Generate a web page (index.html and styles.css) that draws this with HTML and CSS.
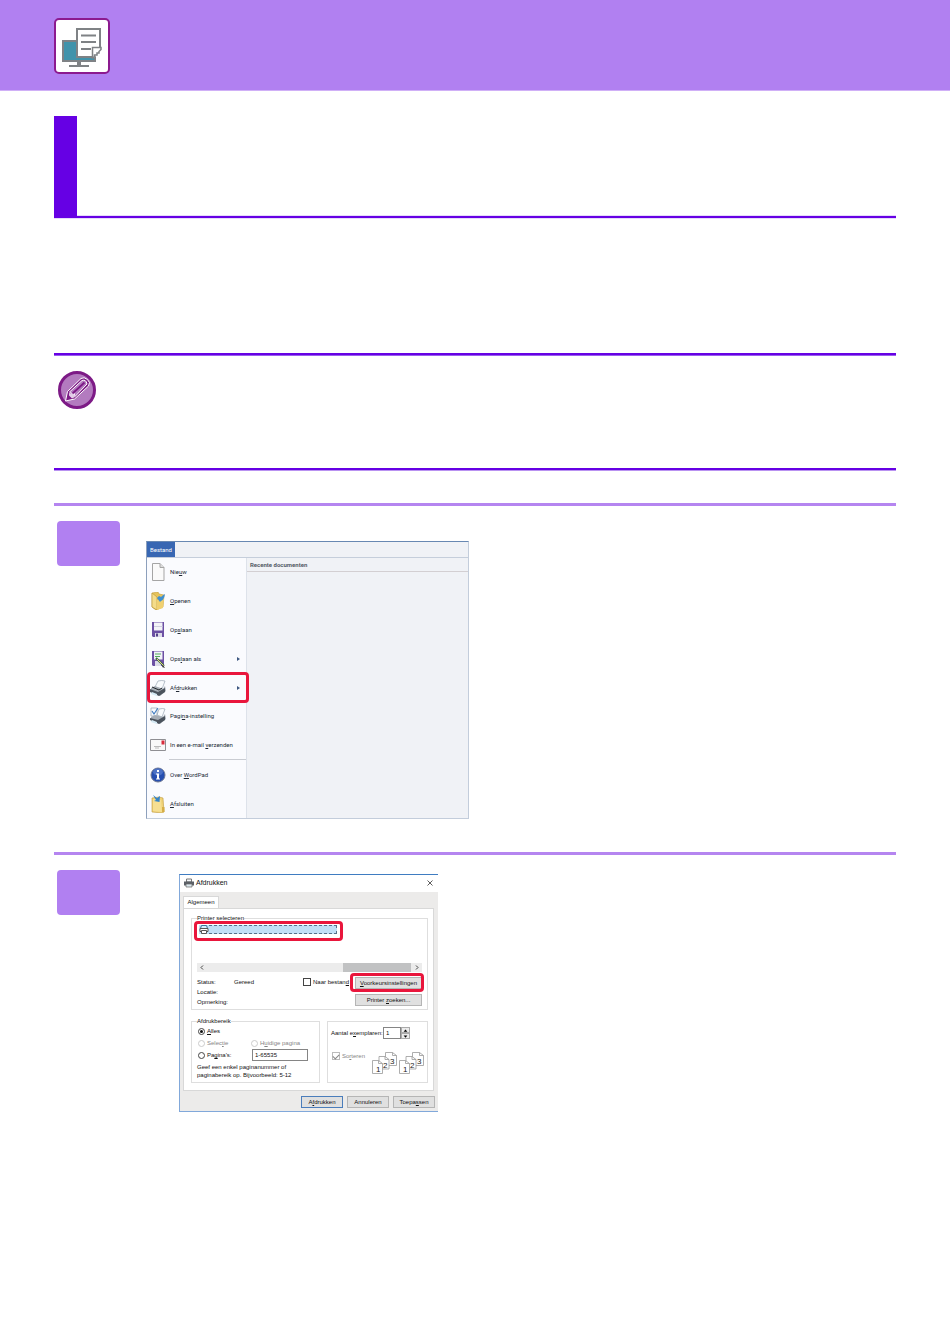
FILE: index.html
```html
<!DOCTYPE html>
<html lang="nl">
<head>
<meta charset="utf-8">
<title>Afdrukken</title>
<link rel="stylesheet" href="styles.css">
</head>
<body>
<header class="banner">
  <svg class="banner-icon" viewBox="0 0 56 56" aria-hidden="true">
    <rect x="1" y="1" width="54" height="54" rx="4" fill="#fff" stroke="#8c1a8f" stroke-width="2"/>
    <rect x="9" y="23" width="32" height="20" fill="#4193ab" stroke="#7f8285" stroke-width="2"/>
    <path d="M23 44h4v3h8v2H15v-2h8z" fill="#7f8285"/>
    <path d="M23 11h23v19l-8 9H23z" fill="#fff"/>
    <path d="M38 39H23V11h23v18" fill="none" stroke="#7f8285" stroke-width="2"/>
    <path d="M38 40V29h9v3l-7 8z" fill="#fff"/>
    <path d="M38.500 40V29.500H47v2l-2 2v1.500h-2v2h-2.500v2z" fill="#fff" stroke="#7f8285" stroke-width="1.500"/>
    <path d="M27 17.500h15M27 24h15M27 31h10" stroke="#7f8285" stroke-width="2"/>
  </svg>
</header>
<main class="content">
  <div class="title-block"></div>
  <section class="note">
    <svg class="note-icon" viewBox="0 0 38 38" aria-hidden="true">
      <circle cx="19" cy="19" r="17.500" fill="#b37bbf" stroke="#7d1a86" stroke-width="3"/>
      <path d="M7.500 30L9.500 20.500 23 7.500q3-2 6.500 1t1 6.500L16.500 28z" fill="#7d1a86" stroke="#fff" stroke-width="1" stroke-linejoin="round"/>
      <path d="M11.500 21L24 9.500q4-1.500 5 3.500L17 25.500l-1-3.500-3 .3z" fill="#b37bbf" stroke="#fff" stroke-width="1"/>
      <path d="M14.500 22.500L26.500 11.500" stroke="#7d1a86" stroke-width="1.800"/>
      <path d="M11 22l2 .5 3 .5 1 3-3 1.500-3-3z" fill="#e3cce8"/>
    </svg>
  </section>

  <section class="step step-menu">
    <div class="badge"></div>
    <div class="wordpad">
      <div class="tabs"><button class="file-tab">Bestand</button></div>
      <nav class="menu">
        <button class="item"><svg viewBox="0 0 16 18"><path d="M2.500 .500h7.500l4 4v13H2.500z" fill="#fafafa" stroke="#a5a5a5"/><path d="M10 .500v4h4" fill="#ddd" stroke="#a5a5a5"/></svg><span>Nie<u>u</u>w</span></button>
        <button class="item"><svg viewBox="0 0 16 18"><path d="M2 1l6-1 1 2 5 1-1 12-7 3-4-3z" fill="#e6c35a" stroke="#c39b36" stroke-width=".6"/><path d="M2 1l5 4v13l-5-3z" fill="#f4dc8a" stroke="#b89332" stroke-width=".6"/><path d="M7 8l7-3-1 11-6 2z" fill="#f0d070"/><path d="M7 6l2-2 2 1q2-2 4-3-1 6-4 7l-1 1z" fill="#3f8fd0"/></svg><span><u>O</u>penen</span></button>
        <button class="item"><svg viewBox="0 0 16 18"><path d="M2 1h12v15H3l-1-1z" fill="#6c50a4"/><path d="M4 1.500h8.500v8H4z" fill="#f3f3f8"/><path d="M4 5.500h8.500" stroke="#cfcfdf"/><path d="M5 12h7v4H5z" fill="#dcdbe8"/><path d="M6 12.500h2v3H6z" fill="#54408a"/></svg><span>Op<u>s</u>laan</span></button>
        <button class="item"><svg viewBox="0 0 16 18"><path d="M2 1h12v15H3l-1-1z" fill="#6c50a4"/><path d="M4 1.500h8.500v8H4z" fill="#f3f3f8"/><path d="M5 4h6M5 6.500h5" stroke="#53ad5d"/><path d="M5 11h6v5H5z" fill="#dcdbe8"/><path d="M6 8l8 8" stroke="#3c6e3f" stroke-width="2"/><path d="M7 9l7 7" stroke="#e3cf83"/><path d="M13 15l2 3-3-1z" fill="#333"/></svg><span>Ops<u>l</u>aan als</span><i class="arrow"></i></button>
        <button class="item marked"><svg viewBox="0 0 16 18"><path d="M5 8l3-6q4-1 7 0l-3 8z" fill="#f9fbfd" stroke="#9aa6b3" stroke-width=".7"/><path d="M1 9l4-2 8 3 2-3 1 5-6 5-9-4z" fill="#a6adb5"/><path d="M0 10l8 3 7-4v4l-6 4-9-4z" fill="#4b535d"/><path d="M2 13l5 2v2l-6-2z" fill="#d4e9f4"/><path d="M2 8l7 3 3-2" fill="none" stroke="#22272d"/></svg><span>Af<u>d</u>rukken</span><i class="arrow"></i></button>
        <button class="item"><svg viewBox="0 0 16 18"><path d="M1 1l6 0v8H1zM7 8l2-6q4-1 6 0l-3 8z" fill="#f9fbfd" stroke="#9aa6b3" stroke-width=".7"/><path d="M2 4l2 3 4-6" fill="none" stroke="#417cc0" stroke-width="1.200"/><path d="M1 10l4-2 8 2 2-3 1 5-6 5-9-4z" fill="#a6adb5"/><path d="M0 11l8 2 7-4v4l-6 4-9-4z" fill="#4b535d"/><path d="M2 13l5 2v2l-6-2z" fill="#d4e9f4"/></svg><span>Pagi<u>n</u>a-instelling</span></button>
        <button class="item"><svg viewBox="0 0 16 18"><path d="M.500 3.500h15v11H.500z" fill="#f8f8f8" stroke="#8f8f93"/><path d="M11.500 4.500h3v4h-3z" fill="#d82c3c"/><path d="M4 10.500h7M5 12h4" stroke="#aaa" stroke-width=".8"/></svg><span>In een e-mail <u>v</u>erzenden</span></button>
        <hr class="divider">
        <button class="item"><svg viewBox="0 0 16 18"><circle cx="8" cy="9" r="7" fill="#264fb0" stroke="#707a94"/><ellipse cx="8" cy="6" rx="5" ry="3.500" fill="#4b71c5"/><path d="M7 4h2v2H7zM6 7.500h3v5h1v1H6v-1h1v-4H6z" fill="#fff"/></svg><span>Over <u>W</u>ordPad</span></button>
        <button class="item"><svg viewBox="0 0 16 18"><path d="M2 3l7-1 4 1 1 14-2 1-10-1z" fill="#efd276" stroke="#bf993c" stroke-width=".6"/><path d="M3 4l8 1 1 12-9-1z" fill="#f6df92"/><path d="M3 0l4 3 3-2-.500 6L4 6l2-1z" fill="#3684c8"/><path d="M12 12h2.500v5H12z" fill="#d6ae45"/></svg><span><u>A</u>fsluiten</span></button>
      </nav>
      <section class="recent"><h2>Recente documenten</h2></section>
    </div>
  </section>

  <section class="step step-dialog">
    <div class="badge"></div>
    <form class="dialog" onsubmit="return false">
      <div class="dialog-title">
        <svg class="printer" viewBox="0 0 10 10"><path d="M2.500 1h5v3h-5z" fill="#f5f7f9" stroke="#777"/><path d="M0 3.500h10v4H0z" fill="#5b6067"/><path d="M2 6h6v3H2z" fill="#dce9ee" stroke="#666" stroke-width=".7"/></svg>
        <span>Afdrukken</span>
        <button class="close" type="button" aria-label="Sluiten"><svg viewBox="0 0 6 6"><path d="M.500.500l5 5m0-5l-5 5" stroke="#333" stroke-width=".8"/></svg></button>
      </div>
      <div class="dialog-body">
        <button class="tab" type="button">Algemeen</button>
        <div class="sheet">
          <fieldset class="printers">
            <legend>Printer selecteren</legend>
            <div class="printer-list">
              <button class="printer-row" type="button" aria-label="Printer"><svg viewBox="0 0 10 9"><path d="M2.500.500h5l1 3h-7z" fill="#d9f0ff" stroke="#39749c"/><path d="M1 3.500h8v3H1z" fill="#fff" stroke="#555"/><path d="M2.500 5.500h5v3h-5z" fill="#fff" stroke="#555"/></svg><span class="focus"></span></button>
            </div>
            <div class="scrollbar"><svg viewBox="0 0 4 5"><path d="M3 .500l-2 2 2 2" fill="none" stroke="#444"/></svg><i class="thumb"></i><svg viewBox="0 0 4 5"><path d="M1 .500l2 2-2 2" fill="none" stroke="#444"/></svg></div>
            <div class="status">
              <div class="facts"><span>Status:</span><span>Gereed</span><span>Locatie:</span><span></span><span>Opmerking:</span><span></span></div>
              <label class="to-file"><input type="checkbox"><span>Naar bestan<u>d</u></span></label>
              <div class="side-buttons"><button type="button" class="btn prefs"><u>V</u>oorkeursinstellingen</button><button type="button" class="btn">Printer <u>z</u>oeken...</button></div>
            </div>
          </fieldset>
          <div class="lower">
            <fieldset class="range">
              <legend>Afdrukbereik</legend>
              <div class="choices">
                <label class="wide"><input type="radio" name="range" checked><span><u>A</u>lles</span></label>
                <label class="off"><input type="radio" name="range" disabled><span>Selec<u>t</u>ie</span></label>
                <label class="off"><input type="radio" name="range" disabled><span>H<u>u</u>idige pagina</span></label>
                <label><input type="radio" name="range"><span>Pa<u>g</u>ina's:</span></label>
                <input class="text" type="text" value="1-65535" aria-label="Pagina's">
              </div>
              <p class="hint">Geef een enkel paginanummer of<br>paginabereik op. Bijvoorbeeld: 5-12</p>
            </fieldset>
            <div class="copies">
              <div class="count">
                <label for="count">Aantal e<u>x</u>emplaren:</label>
                <input class="text" id="count" type="text" value="1">
                <div class="spinner"><button type="button" aria-label="Meer"><svg viewBox="0 0 6 4"><path d="M3 .500L5.500 3.500h-5z"/></svg></button><button type="button" aria-label="Minder"><svg viewBox="0 0 6 4"><path d="M.500.500h5L3 3.500z"/></svg></button></div>
              </div>
              <div class="collate">
                <label class="off"><input type="checkbox" checked disabled><span>So<u>r</u>teren</span></label>
                <svg class="stack" viewBox="0 0 52 22">
                  <g id="pages" fill="#fff" stroke="#999" stroke-width=".8"><path d="M13.500.500h7l4 3v10h-11z"/><path d="M7 4.500h6l4 3v9.500H7z"/><path d="M.500 8.500h6l4 3v10h-10z"/><path d="M20.500.500v3h4M13 4.500v3h4M6.500 8.500v3h4" fill="none"/></g>
                  <use href="#pages" x="27"/>
                  <g class="digits"><text x="4" y="20">1</text><text x="11" y="16">2</text><text x="18" y="12">3</text><text x="31" y="20">1</text><text x="38" y="16">2</text><text x="45" y="12">3</text></g>
                </svg>
              </div>
            </div>
          </div>
        </div>
      </div>
      <div class="actions"><button type="button" class="btn primary">A<u>f</u>drukken</button><button type="button" class="btn">Annuleren</button><button type="button" class="btn">Toepa<u>s</u>sen</button></div>
    </form>
  </section>
</main>
</body>
</html>
```
FILE: styles.css
```css
* { box-sizing: border-box; }
body { margin: 0; background: #fff; color: #111; font-family: "Liberation Sans", Arial, sans-serif; }
button, input { font: inherit; color: inherit; margin: 0; }
button { border: 0; padding: 0; background: none; }
svg { display: block; flex: none; }

.banner { height: 91px; padding: 18px 54px; background: #b180f1; border-bottom: 1px solid #d0b0f7; }
.banner-icon { width: 56px; height: 56px; }
.content { padding: 25px 54px 0; }
.title-block { height: 102px; border-left: 23px solid #6600e4; border-bottom: 2px solid #6600e4; box-shadow: 0 1px #e6dafb, inset 0 -1px #e6dafb; }
.note { margin-top: 135px; height: 117px; padding: 16px 4px; border-top: 2px solid #6600e4; border-bottom: 2px solid #6600e4; box-shadow: 0 1px #b992f1, inset 0 1px #9a5eee; }
.note-icon { width: 38px; height: 38px; }

.step { display: flex; align-items: flex-start; border-top: 3px solid #b585f0; }
.step-menu { margin-top: 33px; height: 349px; padding: 15px 3px; gap: 26px; }
.step-dialog { padding: 15px 3px; gap: 59px; }
.badge { width: 63px; height: 45px; border-radius: 4px; background: #b180f1; }

.wordpad { width: 323px; margin-top: 20px; display: grid; grid-template-columns: 100px 1fr; background: #f0f2f6; border: 1px solid #c3cddb; border-top-color: #6888b2; border-left-color: #8da0bc; font-family: Roboto, "Noto Sans", sans-serif; font-size: 6px; line-height: 8px; color: #222a36; }
.tabs { grid-column: 1 / -1; height: 16px; border-bottom: 1px solid #c5cedb; }
.file-tab { width: 28px; height: 15px; background: #3867b3; color: #fff; }
.menu { height: 260px; display: flex; flex-direction: column; background: #fafbfe; border-right: 1px solid #dde2ea; }
.item { flex: 1; display: flex; align-items: center; gap: 4px; padding: 0 6px 0 3px; position: relative; text-align: left; white-space: nowrap; }
.item svg { width: 16px; height: 18px; }
.arrow { margin-left: auto; border: 2px solid transparent; border-left: 3px solid #3c5780; border-right: 0; }
.marked::after { content: ""; position: absolute; inset: -1px -3px -1px 0; border: 3px solid #e9163c; border-radius: 4px; }
.divider { width: 77px; height: 1px; margin: 0 0 0 auto; border: 0; background: #c9ccd2; }
.recent h2 { margin: 0; padding: 3px 3px; height: 14px; font-size: 6px; font-weight: 700; line-height: 8px; color: #555c67; border-bottom: 1px solid #d3cfd2; }

.dialog { width: 259px; margin-top: 4px; border: 1px solid #81a8da; border-top-color: #3f7cc1; border-right: 0; background: #ecebea; font-size: 6px; line-height: 8px; }
.dialog-title { height: 17px; padding: 0 5px 1px 4px; display: flex; align-items: center; gap: 2px; background: #fff; font-size: 7px; }
.printer { width: 10px; height: 10px; }
.close { margin-left: auto; }
.close svg { width: 6px; height: 6px; }
.dialog-body { padding: 4px 4px 0 3px; }
.tab { display: block; width: 36px; height: 12px; padding-bottom: 2px; background: #fff; border: 1px solid #d8d8d8; border-bottom: 0; }
.sheet { padding: 5px 5px 7px 7px; background: #fff; border: 1px solid #d8d8d8; }
fieldset { min-width: 0; margin: 0; padding: 0 5px; border: 1px solid #dedede; }
legend { padding: 0; height: 8px; }
.printer-list { height: 41px; padding: 3px 0 0 2px; margin-right: 85px; }
.printer-row { display: flex; width: 100%; height: 9px; position: relative; background: #c1e0f7; }
.printer-row svg { width: 10px; height: 9px; }
.focus { flex: 1; height: 9px; border: 1px dashed #54718a; border-left: 0; }
.printer-row::after { content: ""; position: absolute; inset: -4px -6px -7px -5px; border: 3px solid #e9163c; border-radius: 4px; }
.scrollbar { display: flex; align-items: center; justify-content: space-between; gap: 4px; height: 9px; padding: 0 3px; background: #ececec; }
.scrollbar svg { width: 4px; height: 5px; }
.thumb { width: 68px; height: 9px; margin-left: auto; background: #c1c2c3; }
.status { display: flex; align-items: flex-start; margin-top: 5px; height: 32px; }
.facts { display: grid; grid-template-columns: 37px 1fr; grid-auto-rows: 10px; width: 106px; margin-top: 1px; }
label { display: flex; align-items: center; gap: 2px; white-space: nowrap; }
.to-file { margin-top: 1px; }
input[type="checkbox"] { appearance: none; display: grid; place-items: center; width: 8px; height: 8px; border: 1px solid #444; background: #fff; }
input[type="checkbox"]:checked { border-color: #bbb; }
input[type="checkbox"]:checked::before { content: ""; width: 5px; height: 3px; border: 1px solid #888; border-top: 0; border-right: 0; transform: rotate(-45deg); }
input[type="radio"] { appearance: none; display: grid; place-items: center; width: 7px; height: 7px; border: 1px solid #444; border-radius: 50%; background: #fff; }
input[type="radio"]:checked::before { content: ""; width: 3px; height: 3px; border-radius: 50%; background: #111; }
input[type="radio"]:disabled { border-color: #ccc; }
.off { color: #858585; }
.side-buttons { display: flex; flex-direction: column; gap: 5px; width: 67px; margin-left: auto; }
.btn { height: 12px; position: relative; background: #e0e0e0; border: 1px solid #b5b5b5; white-space: nowrap; line-height: 8px; }
.prefs::after { content: ""; position: absolute; inset: -5px -3px -4px -6px; border: 3px solid #e9163c; border-radius: 4px; }
.lower { display: grid; grid-template-columns: 129px 1fr; gap: 7px; margin-top: 7px; }
.choices { display: grid; grid-template-columns: 53px 1fr; grid-auto-rows: 12px; padding-left: 1px; }
.wide { grid-column: 1 / -1; }
.text { width: 56px; height: 12px; padding: 0 2px; background: #fff; border: 1px solid #858585; }
.choices .text { margin-left: 1px; }
.hint { margin: 2px 0; white-space: nowrap; }
.copies { margin-top: 4px; padding: 5px 3px 8px; border: 1px solid #dedede; }
.count { display: flex; align-items: center; }
.count label { flex: 1; gap: 0; }
.count .text { width: 18px; }
.spinner { display: flex; flex-direction: column; width: 9px; margin-right: 14px; }
.spinner button { display: grid; place-items: center; height: 6px; border: 1px solid #aaa; background: #ececec; }
.spinner svg { width: 5px; height: 3px; }
.collate { display: flex; align-items: flex-start; justify-content: space-between; padding: 13px 0 0 1px; }
.stack { width: 52px; height: 22px; }
.digits { font-size: 8px; fill: #222; }
.actions { display: flex; justify-content: flex-end; gap: 4px; padding: 5px 3px 3px; }
.actions .btn { width: 42px; }
.primary { border-color: #4b7dbb; }
```
